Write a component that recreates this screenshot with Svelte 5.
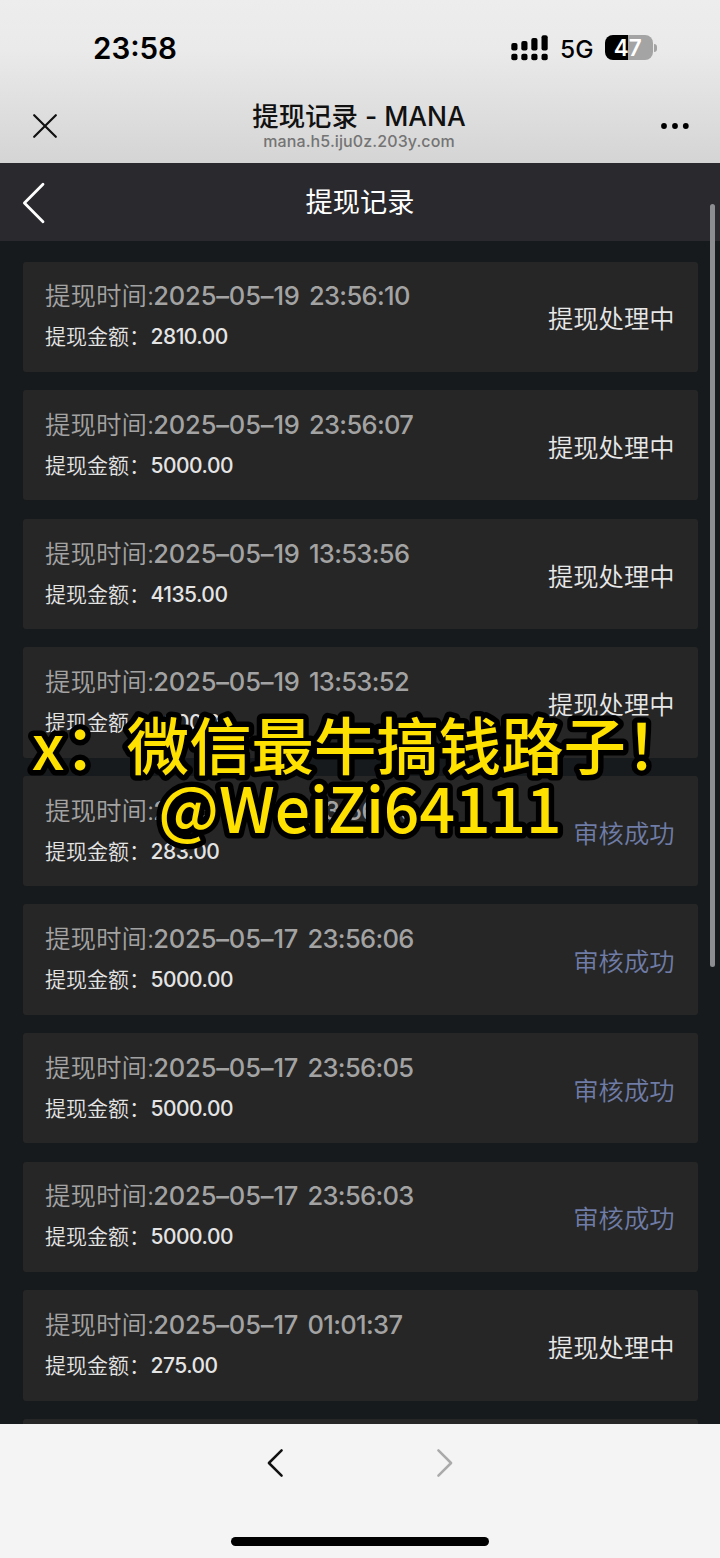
<script lang="ts">
  interface WithdrawRecord {
    date: string;
    time: string;
    amount: string;
    done?: boolean;
  }

  const records: WithdrawRecord[] = [
    { date: '2025–05–19', time: '23:56:10', amount: '2810.00' },
    { date: '2025–05–19', time: '23:56:07', amount: '5000.00' },
    { date: '2025–05–19', time: '13:53:56', amount: '4135.00' },
    { date: '2025–05–19', time: '13:53:52', amount: '5000.00' },
    { date: '2025–05–18', time: '23:56:06', amount: '283.00', done: true },
    { date: '2025–05–17', time: '23:56:06', amount: '5000.00', done: true },
    { date: '2025–05–17', time: '23:56:05', amount: '5000.00', done: true },
    { date: '2025–05–17', time: '23:56:03', amount: '5000.00', done: true },
    { date: '2025–05–17', time: '01:01:37', amount: '275.00' }
  ];
</script>

<div class="screen">
  <header class="top">
    <div class="status">
      <span class="clock">23:58</span>
      <div class="indicators">
        <svg class="signal" width="38" height="26" viewBox="0 0 38 26">
          <rect x="0.3" y="8" width="6.2" height="7.6" rx="2" />
          <rect x="10.3" y="6" width="6.2" height="9.6" rx="2" />
          <rect x="20.3" y="3" width="6.2" height="12.6" rx="2" />
          <rect x="30.5" y="0.3" width="6.2" height="15.3" rx="2" />
          <rect x="0.3" y="18.7" width="6.2" height="6.6" rx="2" />
          <rect x="10.3" y="18.7" width="6.2" height="6.6" rx="2" />
          <rect x="20.3" y="18.7" width="6.2" height="6.6" rx="2" />
          <rect x="30.5" y="18.7" width="6.2" height="6.6" rx="2" />
        </svg>
        <span class="network">5G</span>
        <div class="battery"><span class="level">47</span></div>
        <div class="cap"></div>
      </div>
    </div>
    <div class="titlebar">
      <svg width="24" height="24" viewBox="0 0 24 24">
        <path d="M1.2 1.2L22.8 22.8M22.8 1.2L1.2 22.8" fill="none" stroke="#111" stroke-width="2.2" stroke-linecap="round" />
      </svg>
      <div class="page">
        <div class="page-title">提现记录 - MANA</div>
        <div class="page-host">mana.h5.iju0z.203y.com</div>
      </div>
      <svg width="28" height="6" viewBox="0 0 28 6">
        <circle cx="3" cy="3" r="2.9" />
        <circle cx="14" cy="3" r="2.9" />
        <circle cx="24.8" cy="3" r="2.9" />
      </svg>
    </div>
  </header>

  <nav class="nav">
    <svg class="back" width="24" height="42" viewBox="0 0 24 42">
      <path d="M21 2.2L2.4 21L21 39.8" fill="none" stroke="#fff" stroke-width="2.8" stroke-linecap="round" stroke-linejoin="round" />
    </svg>
    <span>提现记录</span>
  </nav>

  <main class="list">
    {#each records as record}
      <div class="card">
        <div class="info">
          <div class="when">
            提现时间:<span class="date">{record.date}</span> <span class="time">{record.time}</span>
          </div>
          <div class="amount">提现金额：<span class="sum">{record.amount}</span></div>
        </div>
        <div class="state" class:done={record.done}>
          {record.done ? '审核成功' : '提现处理中'}
        </div>
      </div>
    {/each}
    <div class="card"></div>
  </main>

  <footer class="toolbar">
    <div class="arrows">
      <svg width="18" height="30" viewBox="0 0 18 30">
        <path d="M14.6 2.3L1.9 15L14.6 27.7" fill="none" stroke="#111" stroke-width="2.5" stroke-linecap="round" stroke-linejoin="round" />
      </svg>
      <svg width="18" height="30" viewBox="0 0 18 30">
        <path d="M2.4 2.3L15.1 15L2.4 27.7" fill="none" stroke="#aaa" stroke-width="2.5" stroke-linecap="round" stroke-linejoin="round" />
      </svg>
    </div>
    <div class="home"></div>
  </footer>

  <div class="scrollbar"></div>

  <svg class="caption" width="720" height="200" viewBox="0 0 720 200">
    <text x="360" y="89.8">x：微信最牛搞钱路子！</text>
    <text x="360" y="152.8">@WeiZi64111</text>
  </svg>
</div>

<style>
  :global(body) {
    margin: 0;
    background: #f4f4f4;
  }

  .screen {
    position: relative;
    display: flex;
    flex-direction: column;
    width: 720px;
    height: 1558px;
    overflow: hidden;
    font-family: Inter, 'Noto Sans CJK SC', sans-serif;
  }

  .top {
    flex: none;
    height: 162.5px;
    background: linear-gradient(#ededed 0, #eaeaea 50px, #d5d5d5 160px);
  }

  .status {
    display: flex;
    justify-content: space-between;
    align-items: center;
    box-sizing: border-box;
    height: 96px;
    padding: 0 63px 0 93px;
  }

  .clock {
    font-size: 29.5px;
    font-weight: 600;
    line-height: 36px;
  }

  .indicators {
    display: flex;
    align-items: center;
    padding-bottom: 1px;
  }

  .network {
    margin: 2px 0 0 11.5px;
    width: 45px;
    font-size: 24.5px;
    font-weight: 450;
    line-height: 30px;
  }

  .battery {
    width: 47.5px;
    height: 25px;
    border-radius: 8px;
    background: linear-gradient(90deg, #000 47%, #a4a4a4 47%);
    color: #fff;
    text-align: center;
  }

  .level {
    margin-left: -2px;
    font-size: 22.5px;
    font-weight: 600;
    line-height: 25px;
  }

  .cap {
    width: 3px;
    height: 8px;
    margin-left: 1.5px;
    border-radius: 0 4px 4px 0;
    background: #a4a4a4;
  }

  .titlebar {
    display: flex;
    justify-content: space-between;
    align-items: center;
    height: 60px;
    padding: 0 31px 0 33px;
  }

  .page {
    padding-bottom: 3px;
    text-align: center;
  }

  .page-title {
    color: #111;
    font-size: 26.4px;
    font-weight: 500;
    line-height: 32px;
  }

  .page-host {
    color: #747474;
    font-size: 16px;
    font-weight: 500;
    letter-spacing: 0.1px;
    line-height: 18px;
  }

  .nav {
    position: relative;
    flex: none;
    display: flex;
    align-items: center;
    justify-content: center;
    box-sizing: border-box;
    height: 78px;
    padding-bottom: 3px;
    background: #2a292e;
    color: #fff;
    font-size: 27.2px;
  }

  .back {
    position: absolute;
    left: 22px;
    top: 19.5px;
  }

  .list {
    flex: none;
    display: flex;
    flex-direction: column;
    gap: 18.2px;
    box-sizing: border-box;
    height: 1183.5px;
    padding: 21px 22.5px 0;
    overflow: hidden;
    background: #171a1c;
  }

  .card {
    flex: none;
    display: flex;
    justify-content: space-between;
    align-items: center;
    box-sizing: border-box;
    height: 110.4px;
    padding: 0 23px 0 22.5px;
    border-radius: 3px;
    background: #262626;
  }

  .info {
    padding-top: 0.5px;
  }

  .when {
    color: #a3a3a3;
    font-size: 25.5px;
    font-weight: 350;
    line-height: 41px;
  }

  .date {
    margin-left: -1px;
    font-weight: 500;
    letter-spacing: -0.15px;
  }

  .time {
    margin-left: 2px;
    font-weight: 500;
    letter-spacing: -0.65px;
  }

  .amount {
    color: #e4e4e4;
    font-size: 21px;
    font-weight: 350;
    line-height: 42px;
  }

  .sum {
    margin-left: 0.5px;
    font-weight: 500;
    letter-spacing: -0.5px;
  }

  .state {
    padding-top: 1.5px;
    color: #e8e8e8;
    font-size: 25.3px;
    font-weight: 350;
  }

  .done {
    color: #6f7ca6;
  }

  .scrollbar {
    position: absolute;
    top: 204px;
    right: 5px;
    width: 5px;
    height: 763px;
    border-radius: 3px;
    background: #8b8d90;
  }

  .toolbar {
    flex: 1;
    display: flex;
    flex-direction: column;
    align-items: center;
    justify-content: space-between;
    padding: 24px 0 12px;
    background: #f4f4f4;
  }

  .arrows {
    display: flex;
    gap: 151px;
  }

  .home {
    width: 258px;
    height: 9px;
    border-radius: 5px;
    background: #000;
  }

  .caption {
    position: absolute;
    top: 680px;
    left: 0;
    fill: #ffe100;
    stroke: #000;
    stroke-width: 11px;
    stroke-linejoin: round;
    paint-order: stroke fill;
    font-family: 'Noto Sans CJK SC', sans-serif;
    font-size: 62.4px;
    font-weight: 500;
    text-anchor: middle;
  }
</style>
